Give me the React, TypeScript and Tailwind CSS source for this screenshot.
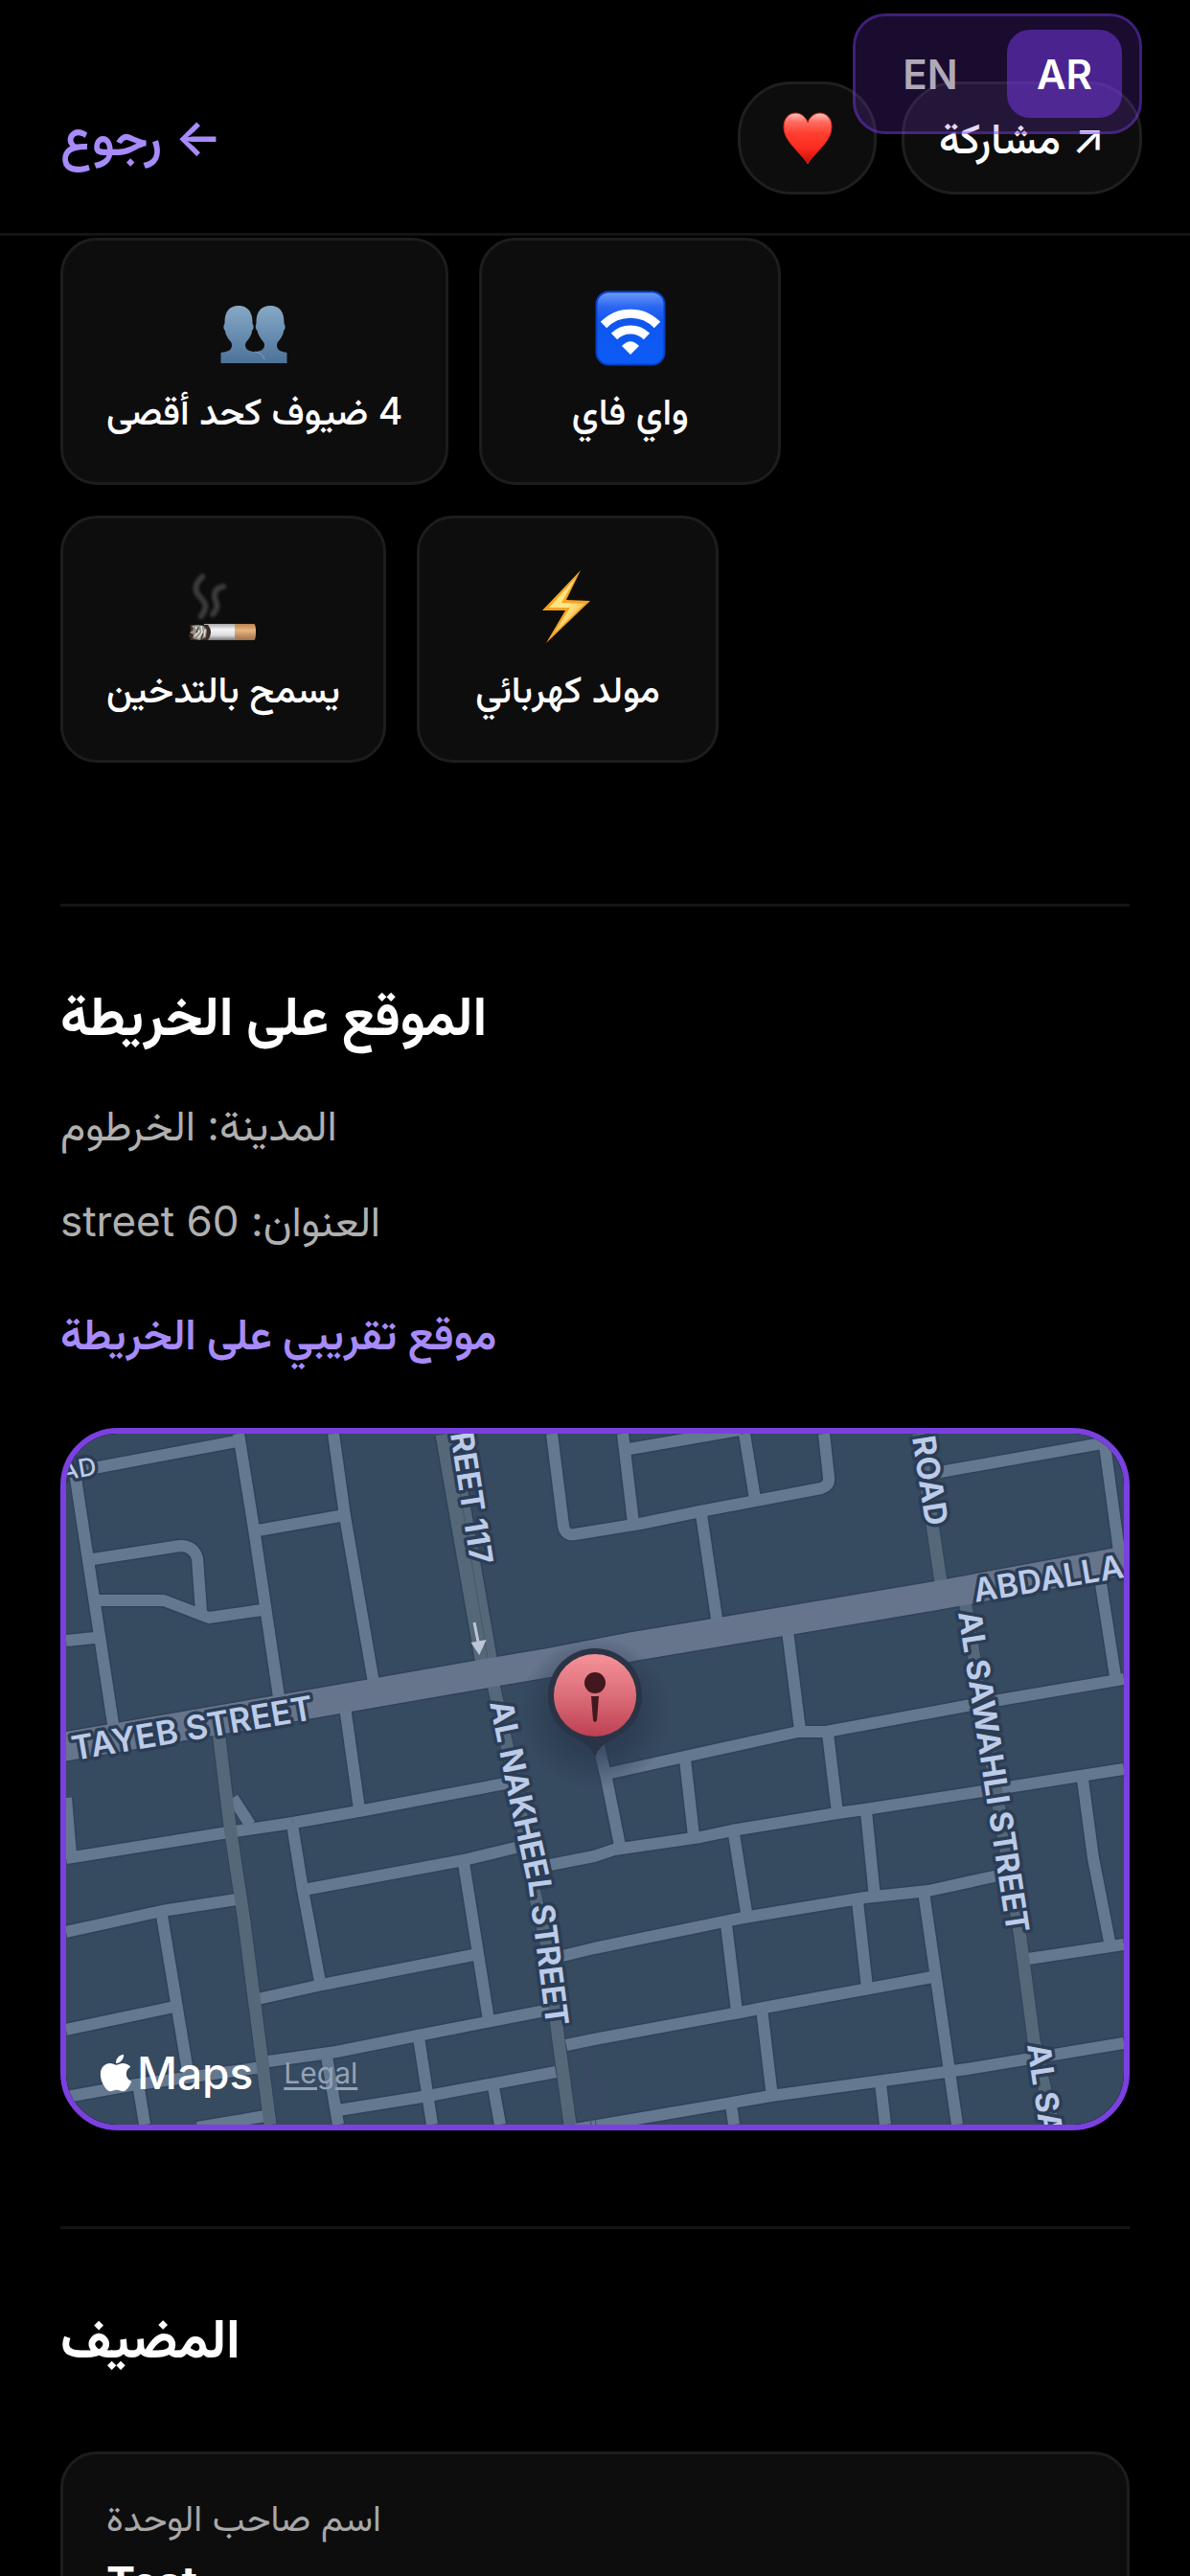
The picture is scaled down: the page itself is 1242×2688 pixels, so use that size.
import { FaApple } from "react-icons/fa";
import type { ReactNode } from "react";

function HeartIcon() {
  return (
    <svg viewBox="0 0 52 55" className="h-[55px] w-[52px]" aria-hidden="true">
      <defs>
        <linearGradient id="heart" x1="0" y1="0" x2="0" y2="1">
          <stop offset="0" stopColor="#ffc4bc" />
          <stop offset="0.18" stopColor="#ff6a5e" />
          <stop offset="0.4" stopColor="#ff3f30" />
          <stop offset="0.7" stopColor="#fb2a1e" />
          <stop offset="1" stopColor="#c40d08" />
        </linearGradient>
      </defs>
      <path
        d="M26 54C24 50 17 43 10 35C4 28 1 22 1 15C1 7 6 1 13.500 1C19 1 24 5 26 11C28 5 33 1 38.500 1C46 1 51 7 51 15C51 22 48 28 42 35C35 43 28 50 26 54Z"
        fill="url(#heart)"
        stroke="#e0241a"
        strokeWidth="1"
      />
    </svg>
  );
}

function GuestsIcon() {
  return (
    <svg viewBox="0 0 80 80" className="size-20" aria-hidden="true">
      <defs>
        <linearGradient id="guests" x1="0" y1="0" x2="0" y2="1">
          <stop offset="0" stopColor="#86a9c6" />
          <stop offset="1" stopColor="#4d7299" />
        </linearGradient>
      </defs>
      <path
        d="M4.500 76V65C11 64 16 63 16 57C16 54 14 53 12 50C10 47 9 44 9 42C7 41 7 36 8.500 35C8 23 13 16 23 16C33 16 38 23 37.500 35C39 36 39 41 37 42C37 44 36 47 34 50C32 53 30 54 30 57C30 62 35 64 40 64C45 64 50 62 50 57C50 54 48 53 46 50C44 47 43 44 42.500 42C40.500 41 40.500 36 41.500 35C41 23 46 16 56.500 16C66 16 71 23 70.500 35C72 36 72 41 70 42C70 44 69 47 67 50C65 53 63 54 63 57C63 63 68 64 73.500 65V76Z"
        fill="url(#guests)"
      />
      <path d="M40 64Q48 65 50 72" fill="none" stroke="#86a3c0" strokeWidth="1" />
    </svg>
  );
}

function WifiIcon() {
  return (
    <svg viewBox="0 0 80 80" className="size-20" aria-hidden="true">
      <defs>
        <linearGradient id="wifi" x1="0" y1="0" x2="0" y2="1">
          <stop offset="0" stopColor="#6f9cf8" />
          <stop offset="0.2" stopColor="#2c68f2" />
          <stop offset="0.4" stopColor="#0f56ee" />
          <stop offset="1" stopColor="#0c5cf8" />
        </linearGradient>
      </defs>
      <rect x="4.500" y="1.500" width="71" height="76" rx="13" fill="url(#wifi)" stroke="#0a3fc4" strokeWidth="2" />
      <g fill="none" stroke="#fff" strokeWidth="9">
        <path d="M12 36A39 39 0 0 1 68 36" />
        <path d="M23 48A24 24 0 0 1 57 48" />
      </g>
      <path d="M40 67L31 58Q40 48.500 49 58Z" fill="#fff" />
    </svg>
  );
}

function SmokingIcon() {
  return (
    <svg viewBox="0 0 80 80" className="size-20" aria-hidden="true">
      <defs>
        <linearGradient id="paper" x1="0" y1="0" x2="0" y2="1">
          <stop offset="0" stopColor="#a9a9ab" />
          <stop offset="0.35" stopColor="#f4f4f6" />
          <stop offset="0.7" stopColor="#dcdcdf" />
          <stop offset="1" stopColor="#77777a" />
        </linearGradient>
        <linearGradient id="tip" x1="0" y1="0" x2="0" y2="1">
          <stop offset="0" stopColor="#b88450" />
          <stop offset="0.4" stopColor="#e8b581" />
          <stop offset="1" stopColor="#a07048" />
        </linearGradient>
        <filter id="smoke" x="-30%" y="-30%" width="160%" height="160%">
          <feGaussianBlur stdDeviation="1.500" />
        </filter>
      </defs>
      <g fill="none" stroke="#3a3a3a" strokeWidth="6" strokeLinecap="round" filter="url(#smoke)">
        <path d="M17 50C24 40 22 36 15 29C9 23 11 15 18 9" />
        <path d="M29 48C36 41 33 36 31 31C30 24 34 20 40 19" />
      </g>
      <path d="M20 58H53V75H20Z" fill="url(#paper)" />
      <path d="M52 58H72Q74 58 74 66.500Q74 75 72 75H52Z" fill="url(#tip)" />
      <path d="M5 59H24Q30 66 24 75H6L4 70 6 66Z" fill="#3a2c22" />
      <path d="M7 60L13 59 19 60 23 64 22 72 15 75 8 73 9 69 5 67 9 64Z" fill="#98928b" />
      <path d="M11 61L15 66 10 71M17 60L18 67 14 73M21 64L20 71" fill="none" stroke="#e3dfd8" strokeWidth="1.500" />
      <path d="M14 62L12 67M19 68L17 74M8 62L7 65" fill="none" stroke="#4b443e" strokeWidth="1.500" />
    </svg>
  );
}

function BoltIcon() {
  return (
    <svg viewBox="0 0 80 80" className="size-20" aria-hidden="true">
      <defs>
        <linearGradient id="bolt" x1="0" y1="0" x2="1" y2="1">
          <stop offset="0" stopColor="#ffd95a" />
          <stop offset="0.5" stopColor="#ffe98c" />
          <stop offset="1" stopColor="#f5a21f" />
        </linearGradient>
      </defs>
      <path d="M54 2L39 33 64 34 18 78 38 44 14 44Z" fill="#f6a323" />
      <path d="M49 10L34 36 58 37 27 67 43 41 21 41Z" fill="url(#bolt)" />
    </svg>
  );
}

function Amenity({ icon, label }: { icon: ReactNode; label: string }) {
  return (
    <li className="flex min-w-[315px] flex-col items-center gap-5 rounded-[38px] border-3 border-[#1d1d1d] bg-[#0d0d0d] px-[45px] pt-[52px] pb-12">
      {icon}
      <span dir="rtl" className="text-[39px] leading-[52px] font-medium text-white">
        {label}
      </span>
    </li>
  );
}

const minorRoads = [
  "M0 42L34 35 178 8",
  "M9 40L49 303",
  "M28 131L119 117Q133 117 137 130L141 186",
  "M30 174H102L149 192 204 184",
  "M0 216L30 213",
  "M180 0L197 106 222 275",
  "M200 101L291 85",
  "M279 0L291 86 321 260",
  "M507 0L519 96Q521 107 531 105L599 94 662 81 788 57Q797 54 796 46L791 0",
  "M581 0L592 93",
  "M588 16L703 -4",
  "M708 0L719 68",
  "M663 84L680 200",
  "M912 40L1104 6",
  "M1084 12L1100 130",
  "M1079 150L1095 253",
  "M753 206L766 309",
  "M564 355L764 311H793L945 283 1104 256",
  "M555 322L564 360 578 430",
  "M646 340L655 420",
  "M795 313L805 396",
  "M237 406L311 393 469 363",
  "M0 443L163 417 237 406",
  "M500 451L551 441 572 434 662 421 695 414 805 396 834 392 957 373 1104 350",
  "M1061 361L1072 443 1090 535",
  "M697 418L711 506",
  "M835 394L844 484",
  "M518 545L551 537 707 505 834 484 900 477 973 461",
  "M689 512L700 603",
  "M826 488L836 578",
  "M895 478L930 721",
  "M522 638L551 632 703 604 728 599 904 567",
  "M1004 548L1104 533",
  "M726 600L737 692",
  "M531 726L736 691 940 663 1104 636",
  "M694 700L697 721",
  "M850 678L855 721",
  "M0 380L5 440",
  "M174 380L192 408",
  "M291 285L306 392",
  "M236 408L247 476 265 572",
  "M248 476L415 445 469 432",
  "M415 448L441 612",
  "M200 590L267 575 430 543",
  "M211 655L282 645 367 628 510 600",
  "M0 520L100 498 178 486",
  "M100 503L128 672",
  "M0 622L113 598",
  "M0 692L67 680 205 661",
  "M76 684L82 721",
  "M137 724L208 712",
  "M272 650L284 721",
  "M284 706L378 691 511 666",
  "M368 630L382 721",
  "M446 682L453 721",
];

const middleRoads = [
  "M159 310L171 410 186 510 213 721",
  "M446 262L470 370 489 480 504 543 513 626 526 721",
  "M890 0L913 155",
  "M938 174L996 526 1010 633 1030 721",
];

function StreetLabel({ id, path, font, children }: { id: string; path: string; font: string; children: string }) {
  return (
    <>
      <path id={id} d={path} fill="none" />
      <text
        className={font}
        fill="#bccbe8"
        stroke="#2b3d55"
        strokeWidth="7"
        strokeLinejoin="round"
        paintOrder="stroke"
      >
        <textPath href={`#${id}`}>{children}</textPath>
      </text>
    </>
  );
}

function MapDrawing() {
  return (
    <svg viewBox="0 0 1104 721" className="block h-auto w-full" role="img" aria-label="Map">
      <defs>
        <linearGradient id="pin" x1="0" y1="0" x2="0" y2="1">
          <stop offset="0" stopColor="#f59298" />
          <stop offset="0.5" stopColor="#dc6e79" />
          <stop offset="1" stopColor="#bd4052" />
        </linearGradient>
        <radialGradient id="glow">
          <stop offset="0.5" stopColor="#26364c" stopOpacity="0.6" />
          <stop offset="1" stopColor="#26364c" stopOpacity="0" />
        </radialGradient>
      </defs>
      <rect width="1104" height="721" fill="#364a60" />
      <g fill="none" stroke="#2f425a" strokeWidth="15" strokeLinejoin="round">
        {minorRoads.map((d) => (
          <path key={d} d={d} />
        ))}
        {middleRoads.map((d) => (
          <path key={d} d={d} />
        ))}
        <path d="M397 0L439 240" strokeWidth="26" />
        <path d="M-4 327L256 282 439 250 504 239 592 222 748 196 908 169 1108 132" strokeWidth="33" />
      </g>
      <g fill="none" stroke="#64788f" strokeWidth="12" strokeLinejoin="round">
        {minorRoads.map((d) => (
          <path key={d} d={d} />
        ))}
      </g>
      <g fill="none" stroke="#556879" strokeWidth="13" strokeLinejoin="round">
        {middleRoads.map((d) => (
          <path key={d} d={d} />
        ))}
        <path d="M397 0L439 240" strokeWidth="23" />
      </g>
      <path d="M401 0L441 240" fill="none" stroke="#45586b" strokeWidth="1" />
      <path d="M540 640L548 721M545 640L553 721" fill="none" stroke="#40486a" strokeWidth="1" />
      <path
        d="M-4 327L256 282 439 250 504 239 592 222 748 196 908 169 1108 132"
        fill="none"
        stroke="#67758c"
        strokeWidth="30"
      />
      <path d="M426 197L431 222M425 219L431 228 436 217Z" fill="#bcc6d8" stroke="#bcc6d8" strokeWidth="3" />

      <StreetLabel id="lbl-tayeb" path="M8 341L300 291" font="text-[35px] font-semibold">TAYEB STREET</StreetLabel>
      <StreetLabel id="lbl-abdalla" path="M949 176L1140 144" font="text-[34px] font-semibold">ABDALLA</StreetLabel>
      <StreetLabel id="lbl-117" path="M401 0L432 200" font="text-[33px] font-bold">REET 117</StreetLabel>
      <StreetLabel id="lbl-nakheel" path="M442 281L463 385 483 475 504 640 510 700" font="text-[33px] font-bold">
        AL NAKHEEL STREET
      </StreetLabel>
      <StreetLabel id="lbl-road" path="M883 4L904 140" font="text-[33px] font-bold">ROAD</StreetLabel>
      <StreetLabel id="lbl-sawahli" path="M931 187L991 580" font="text-[33px] font-bold">AL SAWAHLI STREET</StreetLabel>
      <StreetLabel id="lbl-sa" path="M1003 638L1018 740" font="text-[33px] font-bold">AL SA</StreetLabel>
      <StreetLabel id="lbl-ad" path="M-4 49L60 38" font="text-[26px] font-medium">AD</StreetLabel>

      <circle cx="552" cy="292" r="80" fill="url(#glow)" />
      <path
        d="M552 224A49 49 0 0 1 601 273C601 297 587 311 570 319Q558 324 552 337Q546 324 534 319C517 311 503 297 503 273A49 49 0 0 1 552 224Z"
        fill="#2a3446"
      />
      <circle cx="552" cy="273" r="43" fill="url(#pin)" />
      <circle cx="552" cy="260" r="11" fill="#42181e" />
      <path d="M548 274H556L554 299Q552 303 550 299Z" fill="#42181e" />
    </svg>
  );
}

function SectionTitle({ children }: { children: string }) {
  return (
    <h2 dir="rtl" className="text-left text-[57px] leading-[72px] font-bold text-white">
      {children}
    </h2>
  );
}

export default function App() {
  return (
    <div className="relative h-screen overflow-hidden bg-black font-['Inter','Vazirmatn','Noto_Sans_Arabic','DejaVu_Sans',sans-serif]">
      <header className="flex items-center justify-between border-b-3 border-[#141414] pt-[85px] pr-[50px] pb-10 pl-[63px]">
        <a href="#back" dir="rtl" className="text-[52px] leading-[60px] font-semibold text-[#a78bfa]">
          ← رجوع
        </a>
        <div className="flex gap-[26px]">
          <button
            type="button"
            aria-label="المفضلة"
            className="flex w-[145px] items-center justify-center rounded-[56px] border-3 border-[#1f1f1f] bg-[#0d0d0d]"
          >
            <HeartIcon />
          </button>
          <button
            type="button"
            dir="rtl"
            className="flex h-[118px] items-center justify-center rounded-[56px] border-3 border-[#1f1f1f] bg-[#0d0d0d] px-9 text-[44px] leading-[60px] font-medium text-white"
          >
            ↗ مشاركة
          </button>
        </div>
      </header>

      <div className="absolute top-3.5 right-[50px] flex gap-5 rounded-[34px] border-3 border-[#7c3aed]/40 bg-[#7c3aed]/20 px-[18px] py-3.5">
        <button type="button" className="h-[92px] w-[120px] rounded-3xl text-[42px] font-semibold text-[#b0a9b8]">
          EN
        </button>
        <button type="button" className="h-[92px] w-[120px] rounded-3xl bg-[#7c3aed]/50 text-[42px] font-semibold text-white">
          AR
        </button>
      </div>

      <main className="px-[63px] pt-0.5">
        <ul className="flex flex-col gap-8">
          <li>
            <ul className="flex gap-8">
              <Amenity icon={<GuestsIcon />} label="4 ضيوف كحد أقصى" />
              <Amenity icon={<WifiIcon />} label="واي فاي" />
            </ul>
          </li>
          <li>
            <ul className="flex gap-8">
              <Amenity icon={<SmokingIcon />} label="يسمح بالتدخين" />
              <Amenity icon={<BoltIcon />} label="مولد كهربائي" />
            </ul>
          </li>
        </ul>

        <section className="mt-[147px] border-t-3 border-[#141414] pt-[78px]">
          <SectionTitle>الموقع على الخريطة</SectionTitle>
          <div dir="rtl" className="mt-12 flex flex-col gap-10 text-left text-[44px] leading-[60px] text-[#b0b0b0]">
            <p>المدينة: الخرطوم</p>
            <p>العنوان: street 60</p>
          </div>
          <p dir="rtl" className="mt-[58px] text-left text-[45px] leading-[60px] font-semibold text-[#a78bfa]">
            موقع تقريبي على الخريطة
          </p>
          <div className="relative mt-[68px] overflow-hidden rounded-[60px] border-6 border-[#7a40e0]">
            <MapDrawing />
            <div className="absolute bottom-6 left-[30px] flex items-center gap-8">
              <span className="flex items-center text-[46px] leading-[60px] font-medium text-white">
                <FaApple className="size-11" aria-hidden="true" />
                Maps
              </span>
              <a href="#legal" className="text-[30px] leading-[60px] text-[#94a3b8] underline underline-offset-4">
                Legal
              </a>
            </div>
          </div>
        </section>

        <section className="mt-[100px] border-t-3 border-[#141414] pt-[78px]">
          <SectionTitle>المضيف</SectionTitle>
          <div className="mt-[82px] rounded-[38px] border-3 border-[#1d1d1d] bg-[#0d0d0d] px-[45px] py-[42px]">
            <p dir="rtl" className="text-left text-[38px] leading-[48px] text-[#a8a8a8]">
              اسم صاحب الوحدة
            </p>
            <p className="mt-3.5 text-[45px] leading-[60px] font-bold text-white">Test</p>
          </div>
        </section>
      </main>
    </div>
  );
}
